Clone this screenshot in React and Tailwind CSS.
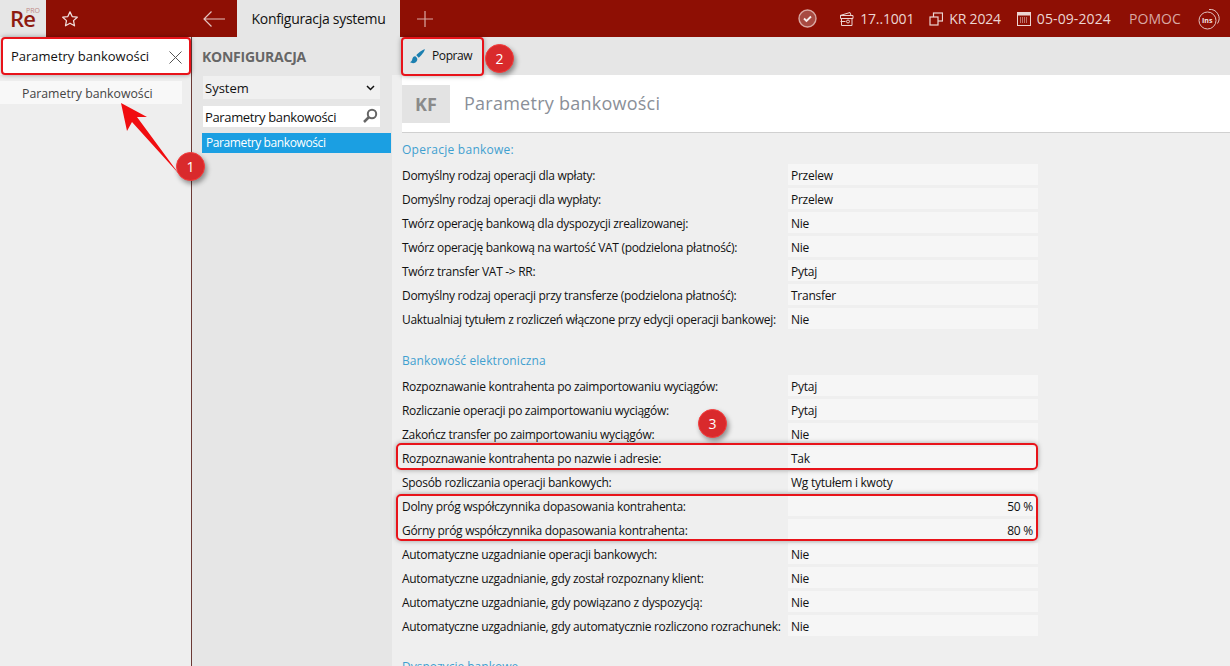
const F = "font-['Open_Sans','Noto_Sans',sans-serif]";

function Badge({ n, className }) {
  return (
    <div className={`absolute w-[29px] h-[29px] rounded-full bg-[#d92a2c] border border-[#f53b3b] text-white text-[14px] flex items-center justify-center shadow-[2px_3px_5px_rgba(0,0,0,0.4)] ${className}`}>
      {n}
    </div>
  );
}

function Row({ label, value, right }) {
  return (
    <div className="flex h-[24px] items-start">
      <div className="w-[386px] h-[21px] leading-[21px] pt-[0.5px] text-[12px] text-[#111] whitespace-nowrap tracking-[-0.3px]">{label}</div>
      <div className={`w-[250px] h-[21px] leading-[21px] pt-[0.5px] bg-[#f6f6f6] text-[12px] text-[#111] pl-[3px] tracking-[-0.25px] ${right ? "text-right pr-[5px]" : "pr-[3px]"}`}>{value}</div>
    </div>
  );
}

const s1 = [
  ["Domyślny rodzaj operacji dla wpłaty:", "Przelew"],
  ["Domyślny rodzaj operacji dla wypłaty:", "Przelew"],
  ["Twórz operację bankową dla dyspozycji zrealizowanej:", "Nie"],
  ["Twórz operację bankową na wartość VAT (podzielona płatność):", "Nie"],
  ["Twórz transfer VAT -> RR:", "Pytaj"],
  ["Domyślny rodzaj operacji przy transferze (podzielona płatność):", "Transfer"],
  ["Uaktualniaj tytułem z rozliczeń włączone przy edycji operacji bankowej:", "Nie"],
];
const s2 = [
  ["Rozpoznawanie kontrahenta po zaimportowaniu wyciągów:", "Pytaj"],
  ["Rozliczanie operacji po zaimportowaniu wyciągów:", "Pytaj"],
  ["Zakończ transfer po zaimportowaniu wyciągów:", "Nie"],
  ["Rozpoznawanie kontrahenta po nazwie i adresie:", "Tak"],
  ["Sposób rozliczania operacji bankowych:", "Wg tytułem i kwoty"],
  ["Dolny próg współczynnika dopasowania kontrahenta:", "50 %", true],
  ["Górny próg współczynnika dopasowania kontrahenta:", "80 %", true],
  ["Automatyczne uzgadnianie operacji bankowych:", "Nie"],
  ["Automatyczne uzgadnianie, gdy został rozpoznany klient:", "Nie"],
  ["Automatyczne uzgadnianie, gdy powiązano z dyspozycją:", "Nie"],
  ["Automatyczne uzgadnianie, gdy automatycznie rozliczono rozrachunek:", "Nie"],
];

function Header() {
  return (
    <div className="h-[37px] bg-[#8e0f04] flex items-stretch shrink-0 relative">
      <div className="w-[46px] bg-[#e6e6e6] relative shrink-0">
        <span className="absolute left-[10px] top-[6px] text-[22px] leading-[24px] font-semibold text-[#8e1a10] tracking-[-0.8px]">Re</span>
        <span className="absolute left-[26px] top-[7px] text-[7px] leading-[8px] text-[#c08a86]">PRO</span>
      </div>
      <div className="w-[46px] flex items-center pl-[15px]">
        <svg width="18" height="18" viewBox="0 0 24 24" fill="none" stroke="#f1dedc" strokeWidth="1.700" strokeLinejoin="round"><path d="M12 2.500l2.900 6.300 6.800.8-5 4.600 1.300 6.800-6-3.400-6 3.400 1.300-6.800-5-4.600 6.800-.8z"/></svg>
      </div>
      <div className="w-[145px] flex items-center pl-[111px]">
        <svg width="22" height="16" viewBox="0 0 22 16" fill="none" stroke="#e3c3c0" strokeWidth="1.200"><path d="M22 8H1M8.500 .5L1 8l7.500 7.500"/></svg>
      </div>
      <div className="w-[163px] bg-[#e6e6e6] flex items-center justify-center text-[14px] text-[#111] font-medium tracking-[-0.3px]">Konfiguracja systemu</div>
      <div className="w-[50px] flex items-center justify-center">
        <svg width="16" height="16" viewBox="0 0 16 16" stroke="#d9a8a3" strokeWidth="1.200"><path d="M8 0v16M0 8h16"/></svg>
      </div>
      <div className="flex-1 flex items-center justify-end text-[14px] text-[#ecd5d2]">
        <svg className="mr-[22px]" width="19" height="19" viewBox="0 0 19 19" fill="none"><circle cx="9.500" cy="9.500" r="8.500" fill="#a84a42" stroke="#d9a8a3" strokeWidth="1.400"/><path d="M6 9.500l2.500 2.500L13 7.500" stroke="#f8eeed" strokeWidth="1.800"/></svg>
        <svg className="mr-[5px]" width="16" height="16" viewBox="0 0 16 16" fill="none" stroke="#ecd5d2"><path d="M1 4.500L11 1.500l1 3M1.500 4.500H14v3H1.500zM2.500 7.500v7H13V7.500M1.500 10.500h5"/><circle cx="9" cy="10.500" r="1.500"/></svg>
        <span className="mr-[15px] tracking-[-0.15px]">17..1001</span>
        <svg className="mr-[6px]" width="14" height="14" viewBox="0 0 14 14" fill="none" stroke="#ecd5d2" strokeWidth="1.200"><rect x="4.500" y="1" width="9" height="8"/><rect x="1" y="5" width="8" height="8" fill="#8e0f04"/></svg>
        <span className="mr-[16px] tracking-[-0.2px]">KR 2024</span>
        <svg className="mr-[6px]" width="14" height="14" viewBox="0 0 14 14"><rect x=".5" y=".5" width="13" height="13" fill="none" stroke="#ecd5d2"/><rect x=".5" y=".5" width="13" height="3" fill="#ecd5d2"/><path d="M3 6h8M3 8h8M3 10h8" stroke="#ecd5d2" strokeDasharray="1 1"/></svg>
        <span className="mr-[18px] tracking-[0.1px]">05-09-2024</span>
        <span className="mr-[17px] text-[#d9a8a3] tracking-[0.1px]">POMOC</span>
        <div className="relative mr-[10px] w-[22px] h-[22px]">
          <svg className="absolute inset-0" width="22" height="22" viewBox="0 0 22 22" fill="none" stroke="#e3c3c0"><circle cx="9.500" cy="12.500" r="8.500"/><path d="M11 1.500a9 9 0 0 1 8.500 14"/></svg>
          <span className="absolute left-[4px] top-[8px] text-[7px] leading-[9px] font-bold text-[#f5e6e4]">Ins</span>
        </div>
      </div>
    </div>
  );
}

export default function App() {
  return (
    <div className={`${F} relative w-[1230px] h-[666px] overflow-hidden bg-[#efefef] flex flex-col`}>
      <Header />
      <div className="flex flex-1 min-h-0">
        <div className="w-[192px] shrink-0 bg-[#eeeeee] border-r border-[#6b3a36]">
          <div className="h-[38px] bg-white flex items-center justify-between pl-[11px] pr-[8px] pt-[2px] w-[190px] text-[13px] text-[#111]">
            <span>Parametry bankowości</span>
            <svg width="13" height="13" viewBox="0 0 13 13" stroke="#555" strokeWidth="1"><path d="M.5.5l12 12M12.500.5l-12 12"/></svg>
          </div>
          <div className="mt-[6px] h-[23px] leading-[25px] w-[182px] bg-[#f8f8f8] pl-[22px] text-[12.3px] text-[#444] whitespace-nowrap">Parametry bankowości</div>
        </div>
        <div className="w-[200px] shrink-0 bg-[#e6e6e6] pl-[11px]">
          <div className="mt-[11px] h-[18px] leading-[18px] text-[14px] font-bold text-[#666] -ml-[1px] tracking-[-0.25px]">KONFIGURACJA</div>
          <div className="mt-[10px] w-[177px] h-[23px] leading-[25px] bg-[#f0f0f0] flex justify-between pl-[2px] pr-[5px] text-[13px] font-medium text-[#111]">
            <span>System</span>
            <svg className="mt-[9px]" width="9" height="6" viewBox="0 0 9 6" fill="none" stroke="#111" strokeWidth="1.500"><path d="M1 1l3.500 3.500L8 1"/></svg>
          </div>
          <div className="mt-[7px] w-[177px] h-[21px] leading-[23px] bg-white flex justify-between pl-[2px] pr-[2px] text-[13px] text-[#111] tracking-[-0.35px]">
            <span>Parametry bankowości</span>
            <svg className="mt-[2px]" width="16" height="16" viewBox="0 0 16 16" fill="none" stroke="#666" strokeWidth="2"><circle cx="10" cy="6" r="4.200"/><path d="M7 9l-5 5" strokeWidth="2.500"/></svg>
          </div>
          <div className="mt-[6px] -ml-[1px] w-[189px] h-[20px] leading-[20px] bg-[#1b9fe2] text-white text-[12px] pl-[4px] tracking-[-0.4px]">Parametry bankowości</div>
        </div>
        <div className="flex-1 min-w-0 flex flex-col">
          <div className="h-[38px] bg-[#e6e6e6] flex items-center pl-[18px] gap-[7px] shrink-0 text-[12px] text-[#111] tracking-[-0.4px]">
            <svg width="15" height="15" viewBox="0 0 15 15" fill="#1b7fb0"><path d="M15 .3C12.500 .8 8 4 6.300 6.300l2.400 2.400C11 7 14.200 3 15 .3zM5.300 7.200C3.200 7.300 2.600 8.700 2.200 10.500 1.900 11.800 1 12.700 0 13.300c2 1.300 6.200 1.400 7.200-2 .4-1.500 0-3-1.900-4.100z"/></svg>
            <span>Popraw</span>
          </div>
          <div className="h-[58px] bg-white border-b border-[#d0d0d0] ml-[10px] shrink-0 flex items-start pt-[10px]">
            <div className="w-[48px] h-[38px] bg-[#e3e3e3] flex items-center justify-center text-[18px] font-bold text-[#8a8a8a]">KF</div>
            <div className="ml-[14px] h-[38px] leading-[37px] text-[18px] text-[#8a8f98] tracking-[0.25px]">Parametry bankowości</div>
          </div>
          <div className="pl-[10px] flex-1">
            <div className="mt-[9px] h-[16px] leading-[16px] text-[12px] text-[#3fa0cf] tracking-[0.25px]">Operacje bankowe:</div>
            <div className="mt-[6px]">{s1.map((r) => <Row key={r[0]} label={r[0]} value={r[1]} />)}</div>
            <div className="mt-[21px] h-[16px] leading-[16px] text-[12px] text-[#3fa0cf] tracking-[0.1px]">Bankowość elektroniczna</div>
            <div className="mt-[6px]">{s2.map((r) => <Row key={r[0]} label={r[0]} value={r[1]} right={r[2]} />)}</div>
            <div className="mt-[20px] h-[16px] leading-[16px] text-[12px] text-[#3fa0cf]">Dyspozycje bankowe</div>
          </div>
        </div>
      </div>

      {/* annotations */}
      <div className="absolute left-[1px] top-[37px] w-[190px] h-[38px] border-2 border-[#e8131a] rounded-[4px] shadow-[0_0_5px_rgba(0,0,0,0.35)]" />
      <div className="absolute left-[401px] top-[37px] w-[83px] h-[39px] border-2 border-[#e8131a] rounded-[4px] shadow-[0_0_5px_rgba(0,0,0,0.35)]" />
      <div className="absolute left-[396px] top-[443px] w-[642px] h-[27px] border-2 border-[#e8131a] rounded-[5px] shadow-[0_0_5px_rgba(0,0,0,0.35)]" />
      <div className="absolute left-[396px] top-[494px] w-[642px] h-[47px] border-2 border-[#e8131a] rounded-[5px] shadow-[0_0_5px_rgba(0,0,0,0.35)]" />
      <svg className="absolute left-[115px] top-[100px]" width="70" height="80" viewBox="0 0 70 80"><path d="M6 3L32 17 22 17 64 74 17 22 12 31z" fill="#f10d10"/></svg>
      <Badge n="1" className="left-[176px] top-[152px]" />
      <Badge n="2" className="left-[485px] top-[44px]" />
      <Badge n="3" className="left-[698px] top-[409px]" />
    </div>
  );
}
